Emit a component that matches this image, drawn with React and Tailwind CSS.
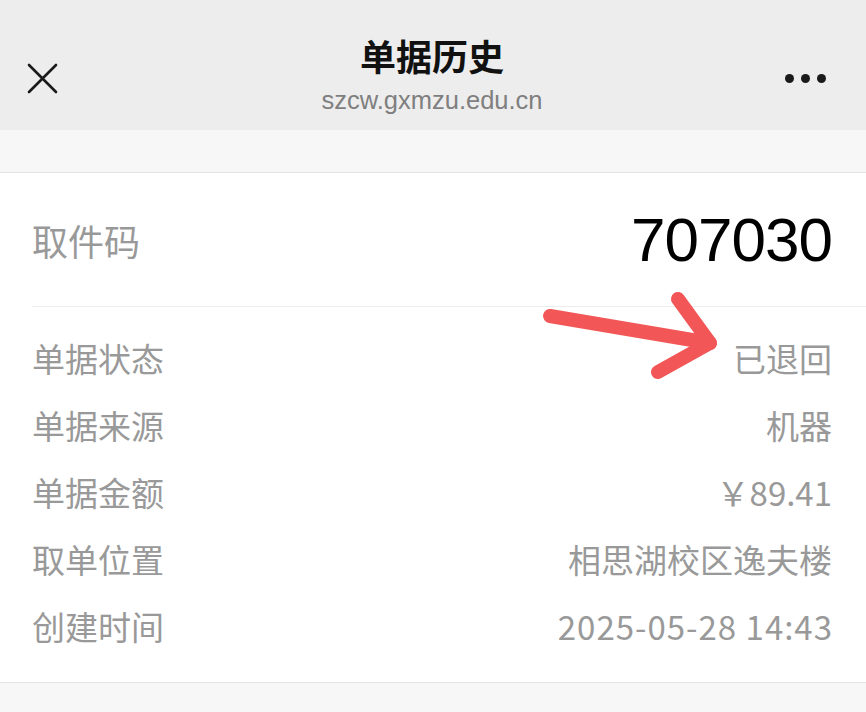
const rows = [
  ['单据状态', '已退回'],
  ['单据来源', '机器'],
  ['单据金额', '￥89.41'],
  ['取单位置', '相思湖校区逸夫楼'],
  ['创建时间', '2025-05-28 14:43'],
];

const font = { fontFamily: '"Noto Sans CJK SC", "Noto Sans", sans-serif' };

export default function App() {
  return (
    <div className="w-[866px] h-[712px] bg-[#f7f7f7] overflow-hidden relative" style={font}>
      {/* header */}
      <div className="h-[130px] bg-[#ededed] flex items-center pl-[27px] pr-[29px]">
        <div className="w-[80px] flex mt-[26px]">
          <svg width="31" height="31" viewBox="0 0 31 31">
            <path d="M2 2 L29 29 M29 2 L2 29" stroke="#1a1a1a" strokeWidth="2.6" strokeLinecap="round" />
          </svg>
        </div>
        <div className="flex-1 flex flex-col items-center pt-[20px]">
          <div className="text-[36px] leading-[42px] font-bold text-[#111]">单据历史</div>
          <div className="text-[25.5px] leading-[32px] text-[#7f7f7f] mt-[8px]" style={{ fontFamily: '"Liberation Sans", sans-serif' }}>
            szcw.gxmzu.edu.cn
          </div>
        </div>
        <div className="w-[80px] flex justify-end gap-[7px] mt-[26px] pr-[11px]">
          <span className="w-[9px] h-[9px] rounded-full bg-[#1a1a1a]" />
          <span className="w-[9px] h-[9px] rounded-full bg-[#1a1a1a]" />
          <span className="w-[9px] h-[9px] rounded-full bg-[#1a1a1a]" />
        </div>
      </div>

      <div className="h-[43px] border-b border-[#e3e3e3]" />

      {/* card */}
      <div className="bg-white border-b border-[#e3e3e3] pl-[32px]">
        <div className="h-[134px] flex items-center justify-between pr-[34px] border-b border-[#ececec]">
          <span className="text-[36px] text-[#999]">取件码</span>
          <span className="text-[62px] text-black tracking-[-1px]" style={{ fontFamily: '"Liberation Sans", sans-serif' }}>707030</span>
        </div>
        <div className="pt-[18px] pb-[22px] pr-[34px]">
          {rows.map(([k, v]) => (
            <div key={k} className="h-[67px] flex items-center justify-between text-[33px] text-[#999]">
              <span>{k}</span>
              <span className={k === '创建时间' ? 'tracking-[1px] -mr-[1px]' : ''}>{v}</span>
            </div>
          ))}
        </div>
      </div>

      {/* annotation arrow */}
      <svg className="absolute left-0 top-0 pointer-events-none" width="866" height="712">
        <g stroke="#f25656" strokeWidth="14" strokeLinecap="round" strokeLinejoin="round" fill="none">
          <path d="M550 316 L710 343" />
          <path d="M678 299 L710 343 L658 372" />
        </g>
      </svg>
    </div>
  );
}
